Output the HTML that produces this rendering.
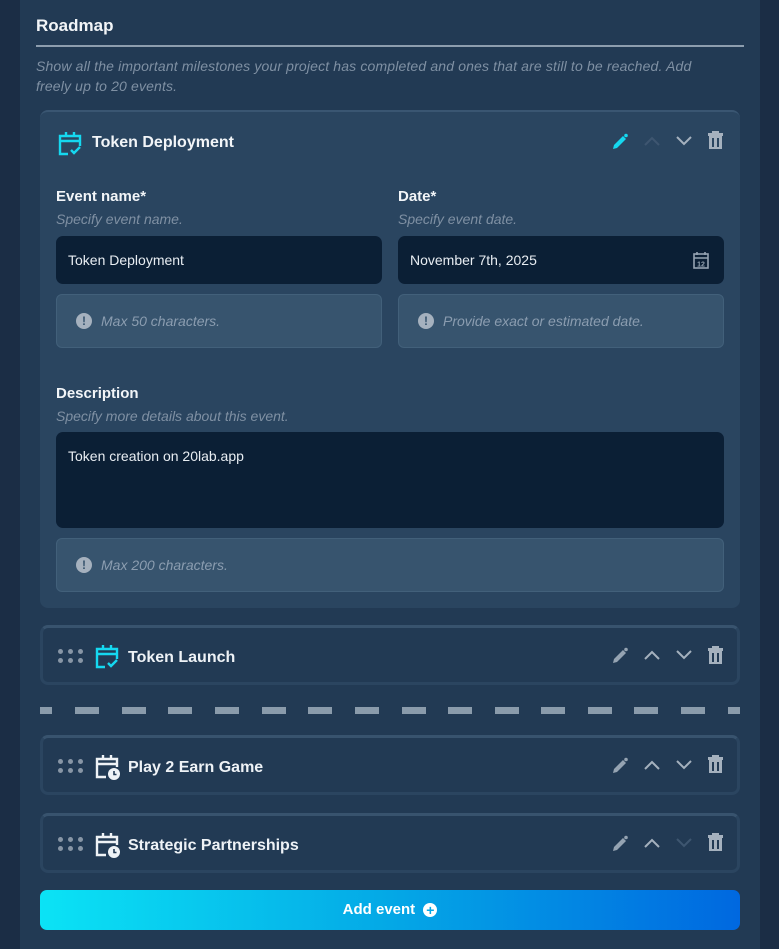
<!DOCTYPE html>
<html><head><meta charset="utf-8"><style>
*{box-sizing:border-box;margin:0;padding:0}
body{width:779px;height:949px;background:#1b2d45;font-family:"Liberation Sans",sans-serif;position:relative;overflow:hidden;color:#fff}
.panel{position:absolute;left:20px;top:0;width:740px;height:949px;background:#223a54}
.abs{position:absolute}
h2{position:absolute;left:36px;top:16px;font-size:17px;font-weight:bold;color:#f2f5f8}
.rule{position:absolute;left:36px;top:45px;width:708px;height:2px;background:#8d9dae}
.desc{position:absolute;left:36px;top:56px;width:692px;font-size:14px;line-height:20px;font-style:italic;color:#7f90a3;letter-spacing:0.15px}
.card{position:absolute;left:40px;top:110px;width:700px;height:498px;background:#2a4560;border-radius:8px;border-top:2px solid #3a5672}
.lbl{position:absolute;font-size:15px;font-weight:bold;color:#f2f5f8}
.sub{position:absolute;font-size:14px;font-style:italic;color:#7f90a3}
.inp{position:absolute;background:#0b1f35;border-radius:7px;font-size:14px;color:#e8edf2;padding-left:12px}
.hint{position:absolute;background:#37546e;border:1px solid #42607a;border-radius:6px;font-size:14px;font-style:italic;color:#8b9db0;padding-left:44px}
.hint .ex{position:absolute;left:19px;top:50%;margin-top:-8px;width:16px;height:16px;border-radius:50%;background:#a5b1be;color:#37546e;font-size:12px;font-weight:bold;font-style:normal;text-align:center;line-height:16px}
.row{position:absolute;left:40px;width:700px;height:60px;border-radius:8px;background:#223a54;border:3px solid #2b4560;border-top-color:#38536e}
.row .t{position:absolute;left:85px;top:21px;font-size:16px;font-weight:bold;color:#eef2f6}
.dots{position:absolute;left:15px;top:21px;width:26px;height:14px}
.dots i{position:absolute;width:5px;height:5px;border-radius:50%;background:#8896a6}
.btn{position:absolute;left:40px;top:890px;width:700px;height:40px;border-radius:7px;background:linear-gradient(90deg,#0be3f5,#04a8e6 50%,#0068e0);text-align:center;font-size:15px;font-weight:bold;line-height:40px}
</style></head><body>
<div class="panel"></div>
<h2>Roadmap</h2>
<div class="rule"></div>
<div class="desc">Show all the important milestones your project has completed and ones that are still to be reached. Add freely up to 20 events.</div>

<div class="card">
 <svg class="abs" style="left:18px;top:19px" width="24" height="26" viewBox="0 0 24 26" fill="none" stroke="#15d8f0" stroke-width="2.4"><path d="M8 1v5M16 1v5M2 10h20M10 23H2V5h20v10"/><path d="M13 19l3 3 6-6"/></svg>
 <div class="abs" style="left:52px;top:22px;font-size:16px;font-weight:bold;color:#f2f5f8">Token Deployment</div>
 <svg class="abs" style="left:570px;top:20px" width="20" height="20" viewBox="0 0 20 20"><path d="M3 17l1-4 9-9 3 3-9 9z" fill="#15d8f0"/><circle cx="16" cy="3.5" r="1.8" fill="#15d8f0"/></svg>
 <svg class="abs" style="left:603px;top:22px" width="18" height="14" viewBox="0 0 18 14" fill="none" stroke="#3e5670" stroke-width="2"><path d="M2 11l7-7 7 7"/></svg>
 <svg class="abs" style="left:635px;top:22px" width="18" height="14" viewBox="0 0 18 14" fill="none" stroke="#a5b1be" stroke-width="2"><path d="M2 3l7 7 7-7"/></svg>
 <svg class="abs" style="left:667px;top:18px" width="17" height="20" viewBox="0 0 17 20"><path d="M1 3h15v3H1zM5 1h7v2H5zM2 6h13v13H2z" fill="#a5b1be"/><path d="M6 8v9M11 8v9" stroke="#2a4560" stroke-width="2"/></svg>

 <div class="lbl" style="left:16px;top:76px">Event name*</div>
 <div class="sub" style="left:16px;top:99px">Specify event name.</div>
 <div class="inp" style="left:16px;top:124px;width:326px;height:48px;line-height:48px">Token Deployment</div>
 <div class="hint" style="left:16px;top:182px;width:326px;height:54px;line-height:52px"><span class="ex">!</span>Max 50 characters.</div>

 <div class="lbl" style="left:358px;top:76px">Date*</div>
 <div class="sub" style="left:358px;top:99px">Specify event date.</div>
 <div class="inp" style="left:358px;top:124px;width:326px;height:48px;line-height:48px">November 7th, 2025
  <svg class="abs" style="left:295px;top:15px" width="16" height="18" viewBox="0 0 16 18" fill="none" stroke="#95a3b2" stroke-width="1.6"><rect x="1" y="3" width="14" height="14"/><path d="M4 1v3M12 1v3M1 7h14"/><text x="8" y="15.5" font-size="7" font-weight="bold" fill="#95a3b2" stroke="none" text-anchor="middle" font-family="Liberation Sans">12</text></svg></div>
 <div class="hint" style="left:358px;top:182px;width:326px;height:54px;line-height:52px"><span class="ex">!</span>Provide exact or estimated date.</div>

 <div class="lbl" style="left:16px;top:273px">Description</div>
 <div class="sub" style="left:16px;top:296px">Specify more details about this event.</div>
 <div class="inp" style="left:16px;top:320px;width:668px;height:96px;padding-top:16px">Token creation on 20lab.app</div>
 <div class="hint" style="left:16px;top:426px;width:668px;height:54px;line-height:52px"><span class="ex">!</span>Max 200 characters.</div>
</div>

<div class="row" style="top:625px">
 <div class="dots"><i style="left:0;top:0"></i><i style="left:10px;top:0"></i><i style="left:20px;top:0"></i><i style="left:0;top:9px"></i><i style="left:10px;top:9px"></i><i style="left:20px;top:9px"></i></div>
 <svg class="abs" style="left:52px;top:16px" width="24" height="26" viewBox="0 0 24 26" fill="none" stroke="#15d8f0" stroke-width="2.4"><path d="M8 1v5M16 1v5M2 10h20M10 23H2V5h20v10"/><path d="M13 19l3 3 6-6"/></svg>
 <div class="t">Token Launch</div>
</div>
<div class="row" style="top:735px">
 <div class="dots"><i style="left:0;top:0"></i><i style="left:10px;top:0"></i><i style="left:20px;top:0"></i><i style="left:0;top:9px"></i><i style="left:10px;top:9px"></i><i style="left:20px;top:9px"></i></div>
 <svg class="abs" style="left:52px;top:16px" width="26" height="26" viewBox="0 0 26 26"><path d="M8 1v5M16 1v5M2 10h20M11 23H2V5h20v8" fill="none" stroke="#eef2f6" stroke-width="2.4"/><circle cx="19" cy="20" r="6" fill="#eef2f6"/><path d="M19 17v3.5h2.5" stroke="#223a54" stroke-width="1.6" fill="none"/></svg>
 <div class="t">Play 2 Earn Game</div>
</div>
<div class="row" style="top:813px">
 <div class="dots"><i style="left:0;top:0"></i><i style="left:10px;top:0"></i><i style="left:20px;top:0"></i><i style="left:0;top:9px"></i><i style="left:10px;top:9px"></i><i style="left:20px;top:9px"></i></div>
 <svg class="abs" style="left:52px;top:16px" width="26" height="26" viewBox="0 0 26 26"><path d="M8 1v5M16 1v5M2 10h20M11 23H2V5h20v8" fill="none" stroke="#eef2f6" stroke-width="2.4"/><circle cx="19" cy="20" r="6" fill="#eef2f6"/><path d="M19 17v3.5h2.5" stroke="#223a54" stroke-width="1.6" fill="none"/></svg>
 <div class="t">Strategic Partnerships</div>
</div>

<svg class="abs" style="left:0;top:0" width="779" height="949">
 <g fill="#8a9bab">
  <rect x="40" y="707" width="12" height="7"/><rect x="75" y="707" width="24" height="7"/><rect x="122" y="707" width="24" height="7"/><rect x="168" y="707" width="24" height="7"/><rect x="215" y="707" width="24" height="7"/><rect x="262" y="707" width="24" height="7"/><rect x="308" y="707" width="24" height="7"/><rect x="355" y="707" width="24" height="7"/><rect x="402" y="707" width="24" height="7"/><rect x="448" y="707" width="24" height="7"/><rect x="495" y="707" width="24" height="7"/><rect x="541" y="707" width="24" height="7"/><rect x="588" y="707" width="24" height="7"/><rect x="634" y="707" width="24" height="7"/><rect x="681" y="707" width="24" height="7"/><rect x="728" y="707" width="12" height="7"/>
 </g>
 <g>
  <path d="M613 663l1-4 9-9 3 3-9 9z" fill="#95a3b2"/><circle cx="626" cy="649.5" r="1.8" fill="#95a3b2"/>
  <path d="M645 659l7-7 7 7" fill="none" stroke="#a5b1be" stroke-width="2"/>
  <path d="M677 651l7 7 7-7" fill="none" stroke="#a5b1be" stroke-width="2"/>
  <path d="M708 648h15v3h-15zM712 646h7v2h-7zM709 651h13v13h-13z" fill="#a5b1be"/><path d="M713 653v9M718 653v9" stroke="#223a54" stroke-width="2"/>
  <path d="M613 773l1-4 9-9 3 3-9 9z" fill="#95a3b2"/><circle cx="626" cy="759.5" r="1.8" fill="#95a3b2"/>
  <path d="M645 769l7-7 7 7" fill="none" stroke="#a5b1be" stroke-width="2"/>
  <path d="M677 761l7 7 7-7" fill="none" stroke="#a5b1be" stroke-width="2"/>
  <path d="M708 757h15v3h-15zM712 755h7v2h-7zM709 760h13v13h-13z" fill="#a5b1be"/><path d="M713 762v9M718 762v9" stroke="#223a54" stroke-width="2"/>
  <path d="M613 851l1-4 9-9 3 3-9 9z" fill="#95a3b2"/><circle cx="626" cy="837.5" r="1.8" fill="#95a3b2"/>
  <path d="M645 847l7-7 7 7" fill="none" stroke="#a5b1be" stroke-width="2"/>
  <path d="M677 839l7 7 7-7" fill="none" stroke="#3e5670" stroke-width="2"/>
  <path d="M708 835h15v3h-15zM712 833h7v2h-7zM709 838h13v13h-13z" fill="#a5b1be"/><path d="M713 840v9M718 840v9" stroke="#223a54" stroke-width="2"/>
 </g>
</svg>

<div class="btn">Add event <span style="display:inline-block;width:14px;height:14px;border-radius:50%;background:#fff;color:#05a8e6;font-size:14px;line-height:14px;vertical-align:-1px;margin-left:4px">+</span></div>
</body></html>
